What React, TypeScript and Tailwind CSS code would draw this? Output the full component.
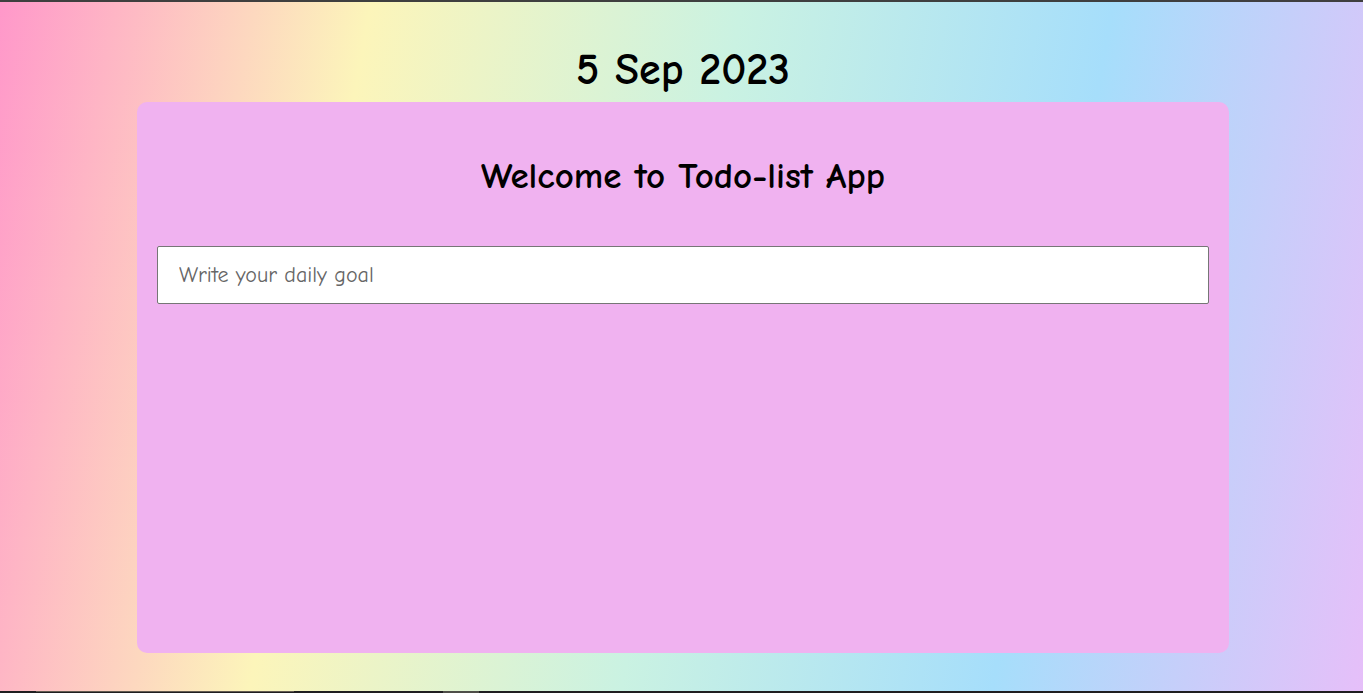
export default function App() {
  return (
    <div className="flex min-h-screen flex-col border-t-2 border-[#3f3f3f] bg-[linear-gradient(100deg,#ff98ca,#fcf5ba,#caf2e2,#a6defb,#e6bff9)] bg-origin-border font-['Comic_Sans_MS','Comic_Neue','Noto_Sans',sans-serif] text-black">
      <main className="flex grow flex-col pt-9 pr-[134px] pb-[38px] pl-[137px]">
        <h1 className="text-center text-[44px] leading-16 font-bold">5 Sep 2023</h1>
        <section className="grow rounded-[10px] bg-[#f0b2f0] px-5 pt-12">
          <h2 className="text-center text-[37px] leading-[52px] font-bold">Welcome to Todo-list App</h2>
          <form className="pt-11" onSubmit={(event) => event.preventDefault()}>
            <input
              type="text"
              aria-label="Daily goal"
              placeholder="Write your daily goal"
              className="h-[58px] w-full rounded-xs border border-[#767676] bg-white px-[21px] text-[22px] font-normal placeholder:text-[#666666]"
            />
          </form>
        </section>
      </main>
      <footer className="flex h-0.5 bg-[#1f1e20]">
        <div className="w-9" />
        <div className="w-[258px] border-t border-[#625a50]" />
        <div className="w-[149px]" />
        <div className="w-9 bg-[#4e4e48]" />
      </footer>
    </div>
  );
}
